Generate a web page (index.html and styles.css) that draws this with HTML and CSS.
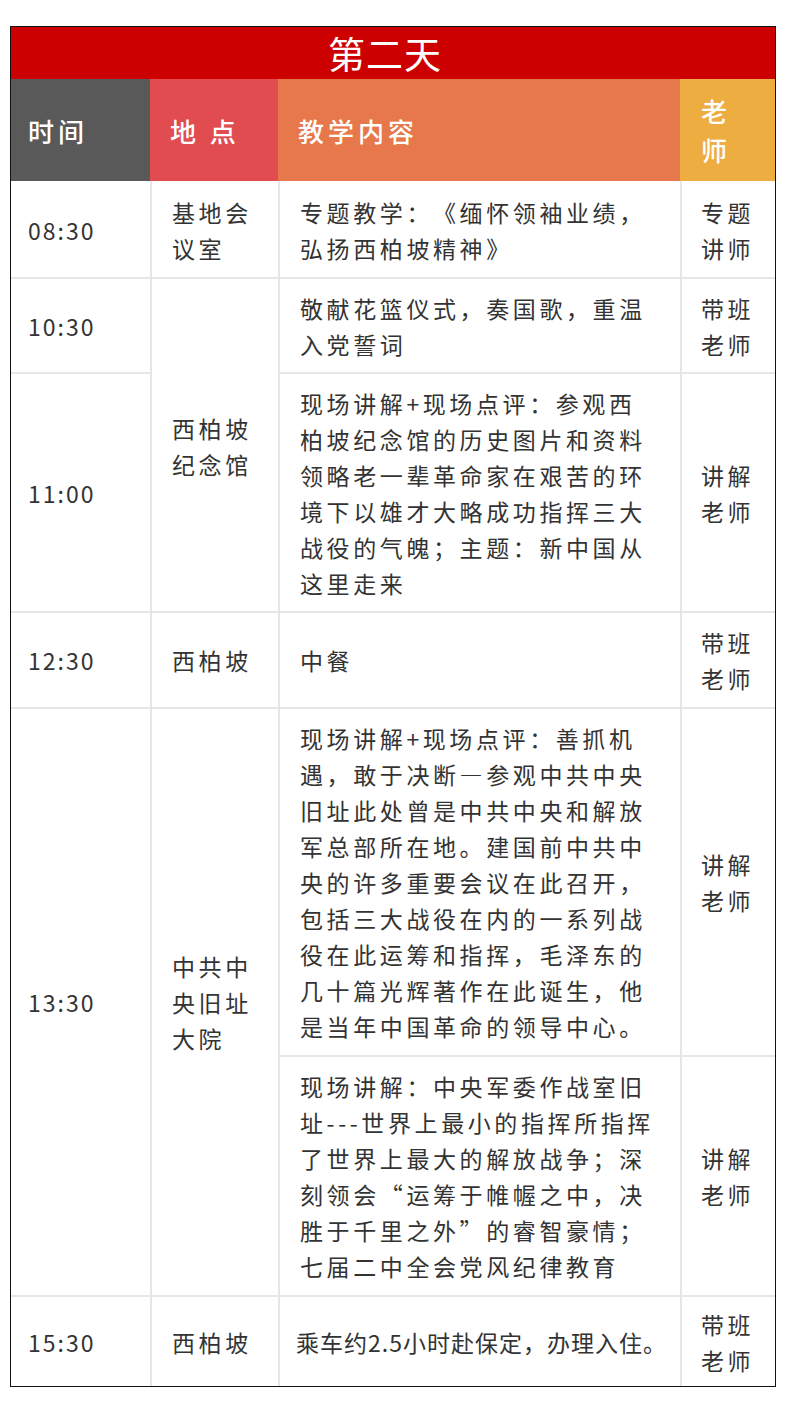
FILE: index.html
```html
<!DOCTYPE html>
<html lang="zh-CN">
<head>
<meta charset="utf-8">
<title>第二天</title>
<link rel="stylesheet" href="styles.css">
</head>
<body>
<table class="schedule">
  <colgroup>
    <col class="col-time">
    <col class="col-place">
    <col class="col-content">
    <col class="col-teacher">
  </colgroup>
  <thead>
    <tr><th class="title" colspan="4">第二天</th></tr>
    <tr class="head">
      <th class="h-time">时间</th>
      <th class="h-place">地 点</th>
      <th class="h-content">教学内容</th>
      <th class="h-teacher">老<br>师</th>
    </tr>
  </thead>
  <tbody>
    <tr class="first">
      <td class="time">08:30</td>
      <td class="place">基地会<br>议室</td>
      <td class="content">专题教学：《缅怀领袖业绩，<br>弘扬西柏坡精神》</td>
      <td class="teacher">专题<br>讲师</td>
    </tr>
    <tr class="snug">
      <td class="time">10:30</td>
      <td class="place" rowspan="2">西柏坡<br>纪念馆</td>
      <td class="content">敬献花篮仪式，奏国歌，重温<br>入党誓词</td>
      <td class="teacher">带班<br>老师</td>
    </tr>
    <tr class="snug">
      <td class="time">11:00</td>
      <td class="content">现场讲解+现场点评：参观西<br>柏坡纪念馆的历史图片和资料<br>领略老一辈革命家在艰苦的环<br>境下以雄才大略成功指挥三大<br>战役的气魄；主题：新中国从<br>这里走来</td>
      <td class="teacher">讲解<br>老师</td>
    </tr>
    <tr>
      <td class="time">12:30</td>
      <td class="place">西柏坡</td>
      <td class="content">中餐</td>
      <td class="teacher">带班<br>老师</td>
    </tr>
    <tr>
      <td class="time" rowspan="2">13:30</td>
      <td class="place" rowspan="2">中共中<br>央旧址<br>大院</td>
      <td class="content">现场讲解+现场点评：善抓机<br>遇，敢于决断—参观中共中央<br>旧址此处曾是中共中央和解放<br>军总部所在地。建国前中共中<br>央的许多重要会议在此召开，<br>包括三大战役在内的一系列战<br>役在此运筹和指挥，毛泽东的<br>几十篇光辉著作在此诞生，他<br>是当年中国革命的领导中心。</td>
      <td class="teacher">讲解<br>老师</td>
    </tr>
    <tr>
      <td class="content">现场讲解：中央军委作战室旧<br>址---世界上最小的指挥所指挥<br>了世界上最大的解放战争；深<br>刻领会“运筹于帷幄之中，决<br>胜于千里之外”的睿智豪情；<br>七届二中全会党风纪律教育</td>
      <td class="teacher">讲解<br>老师</td>
    </tr>
    <tr class="last">
      <td class="time">15:30</td>
      <td class="place">西柏坡</td>
      <td class="content tight">乘车约2.5小时赴保定，办理入住。</td>
      <td class="teacher">带班<br>老师</td>
    </tr>
  </tbody>
</table>
</body>
</html>
```

FILE: styles.css
```css
html, body {
  margin: 0;
  padding: 0;
  background: #ffffff;
}

body {
  padding: 26px 0 0 10px;
  font-family: "Noto Sans CJK SC", "Noto Sans", sans-serif;
  color: #333333;
  text-spacing-trim: space-all;
}

.schedule {
  width: 766px;
  table-layout: fixed;
  border-collapse: separate;
  border-spacing: 0;
  border: 1px solid #111111;
}

.col-time { width: 139px; }
.col-place { width: 128px; }
.col-content { width: 402px; }
.col-teacher { width: 95px; }

.title {
  background: #cc0000;
  color: #ffffff;
  font-size: 37px;
  font-weight: 400;
  line-height: 52px;
  height: 52px;
  padding: 0 16px 0 0;
  text-align: center;
  letter-spacing: 1px;
}

.head th {
  color: #ffffff;
  font-size: 26px;
  font-weight: 500;
  line-height: 39px;
  letter-spacing: 4px;
  text-align: left;
  vertical-align: middle;
  padding: 12px 0 12px 20px;
}

.head .h-time { background: #595959; padding-left: 17px; }
.head .h-place { background: #e04c4f; }
.head .h-content { background: #e6784b; }
.head .h-teacher { background: #edad40; padding-left: 21px; }

td {
  font-size: 23px;
  line-height: 36px;
  letter-spacing: 3.6px;
  vertical-align: middle;
  text-align: left;
  padding: 11px 0 11px 20px;
  border-top: 2px solid #e6e6e6;
  border-left: 2px solid #e6e6e6;
}

tr.first td { border-top: 0; padding-top: 13px; }

tr.snug td { padding-bottom: 10px; }

td.time {
  border-left: 0;
  padding-left: 17px;
  letter-spacing: 2px;
}

td.teacher { padding-left: 19px; }

td.tight { letter-spacing: 1px; padding-left: 16px; }

tr.last td {
  padding-top: 9px;
  padding-bottom: 8px;
}
```
